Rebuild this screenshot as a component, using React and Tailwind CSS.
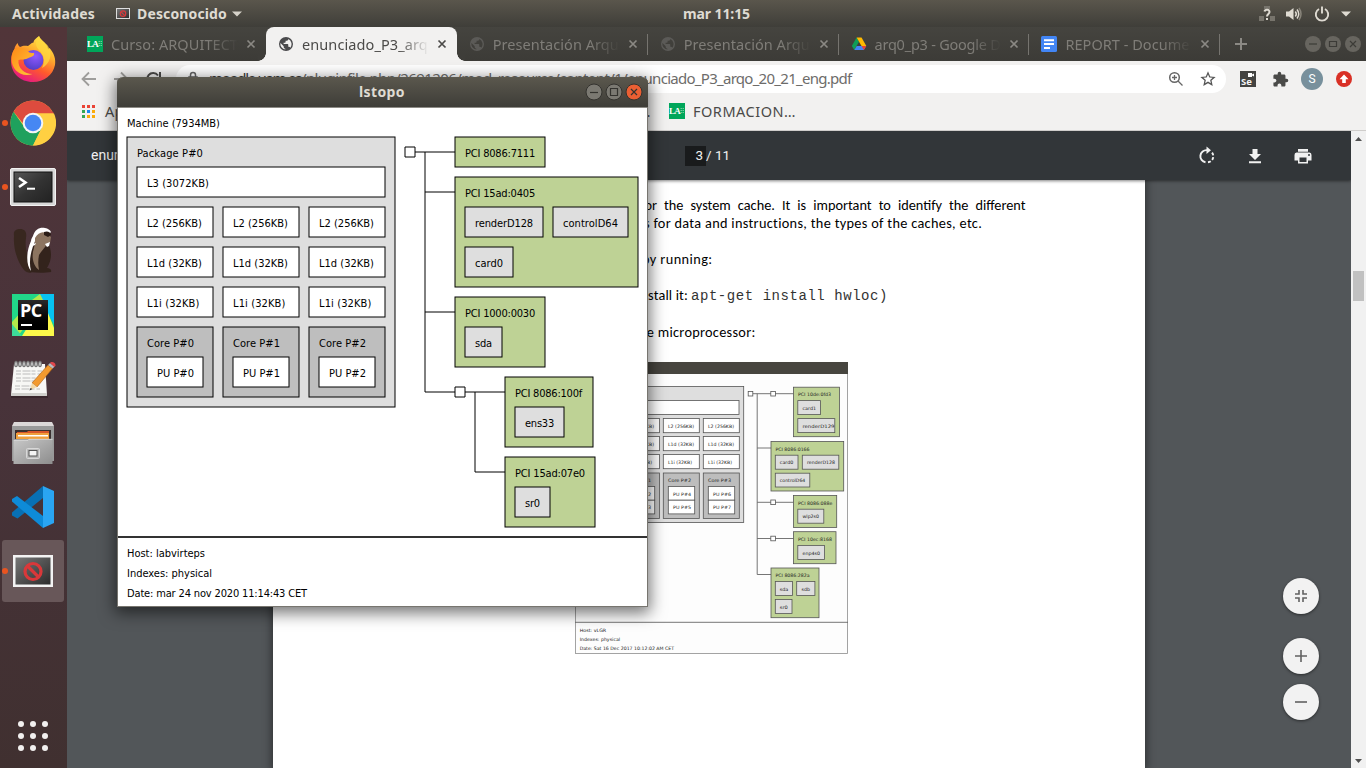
import { useLayoutEffect, useRef, useState } from "react";

/* Text tracked so that it fills a known advance width. */
function Fit({ w, by = "letter", className = "", children }) {
  const ref = useRef(null);
  const [gap, setGap] = useState(0);
  useLayoutEffect(() => {
    const el = ref.current;
    const prev = el.style.cssText;
    el.style.letterSpacing = "0px";
    el.style.wordSpacing = "0px";
    const nat = el.getBoundingClientRect().width;
    el.style.cssText = prev;
    const n = by === "word" ? children.split(" ").length - 1 : children.length;
    setGap((w - nat) / n);
  }, [w, by, children]);
  const style = by === "word" ? { wordSpacing: gap + "px" } : { letterSpacing: gap + "px" };
  return (
    <span ref={ref} style={style} className={"inline-block self-start whitespace-pre " + className}>
      {children}
    </span>
  );
}

/* ---------- icons ---------- */

function Globe({ color }) {
  return (
    <svg width="16" height="16" viewBox="0 0 24 24" className="shrink-0">
      <path
        fill={color}
        d="M12 1.5A10.5 10.5 0 1 0 12 22.5 10.5 10.5 0 1 0 12 1.5zm-1 18.900a8.500 8.500 0 0 1-7.300-9.900L8.500 15.500v1c0 1.100.9 2.500 2.500 2.500zm7.500-2.900c-.3-.9-1.100-1.500-2.100-1.500h-1v-3c0-.6-.5-1-1-1h-6v-2h2c.6 0 1-.5 1-1v-2h2c1.100 0 2-.9 2-2v-.4a8.500 8.500 0 0 1 3.100 12.900z"
      />
    </svg>
  );
}

function UamIcon() {
  return (
    <span className="flex h-4 w-4 shrink-0 items-center overflow-hidden bg-[#00a65a] font-['Liberation_Serif',serif] text-[9px] leading-none font-bold text-white">
      <span className="tracking-[-0.8px]">LA</span>
      <svg width="5" height="6" className="shrink-0">
        <path d="M.5 .5h4M.5 2.500h4M.5 4.500h4" stroke="#6fcb9a" strokeDasharray="1.500 .5" />
      </svg>
    </span>
  );
}

function DriveIcon() {
  return (
    <svg width="16" height="16" viewBox="0 0 16 16" className="shrink-0">
      <path fill="#0f9d58" d="M5.600 1.500L8 5.700 3.300 14 .8 9.900z" />
      <path fill="#ffba00" d="M5.600 1.500h4.900L15.300 10h-4.800z" />
      <path fill="#4285f4" d="M5.700 10h9.500L12.800 14H3.300z" />
      <path fill="#ea4335" d="M10.500 10h4.800L12.900 14z" />
    </svg>
  );
}

function DocsIcon() {
  return (
    <svg width="16" height="16" viewBox="0 0 16 16" className="shrink-0">
      <rect width="16" height="16" rx="1.500" fill="#4285f4" />
      <path stroke="#fff" strokeWidth="2" d="M3 4.200h10M3 8h10M3 12h6" />
    </svg>
  );
}

function Close({ color }) {
  return (
    <svg width="16" height="16" viewBox="0 0 16 16" className="shrink-0">
      <path d="M4.500 4.500l7 7M11.500 4.500l-7 7" stroke={color} strokeWidth="1.700" />
    </svg>
  );
}

function Firefox() {
  return (
    <svg width="46" height="48" viewBox="0 0 46 48">
      <defs>
        <linearGradient id="ff1" x1=".8" y1="0" x2=".3" y2="1">
          <stop offset="0" stopColor="#fff44f" />
          <stop offset=".35" stopColor="#ffb02e" />
          <stop offset=".65" stopColor="#ff5a2c" />
          <stop offset="1" stopColor="#e31587" />
        </linearGradient>
        <radialGradient id="ff2" cx=".6" cy=".3" r=".8">
          <stop offset="0" stopColor="#9059ff" />
          <stop offset="1" stopColor="#4a3bc0" />
        </radialGradient>
        <linearGradient id="ff3" x1="0" y1="0" x2="1" y2="1">
          <stop offset="0" stopColor="#ff8a16" />
          <stop offset="1" stopColor="#ffc83a" />
        </linearGradient>
      </defs>
      <path
        fill="url(#ff1)"
        d="M29 1c1 3 5 5.500 7 8.500 1.500 1.500 2 4 2 5l1.500-1.500C44 18 46 24 45 30c-2 10-11 17-22 17C10 47 1 38 1 26c0-5 1-8 3.500-12 0-2 1.500-4 3-6 .5 2 1.500 3 2.500 4 3-1.500 5-1.500 8-1 2-1.500 3-3 5.500-3.500C24 4 27 3 29 1z"
      />
      <circle cx="23.500" cy="25" r="10" fill="url(#ff2)" />
      <path
        fill="url(#ff3)"
        d="M4.500 14C8 12 13 12 16 15c2 2.500 5 3 8 3 1 3-3 4-5.500 5-3 2-7 1-10 2-1 8 6 14 14 14-11 4-21-4-21-15 0-4 1-7 3-10z"
      />
      <path fill="#ffda3f" opacity=".75" d="M29 1c-4 5-4 10 0 14 4 4 7 10 3 18 8-4 11-14 6-22-2-3-8-6-9-10z" />
    </svg>
  );
}

function Chrome() {
  return (
    <svg width="46" height="46" viewBox="-23 -23 46 46">
      <circle r="22.500" fill="#fdd142" />
      <path d="M-19.500-11.200A22.500 22.500 0 0 1 19.500-11.200Q21 -10 21.200-9.500H0L-8 3z" fill="#dd4b3e" />
      <path d="M-19.500-11.200A22.500 22.500 0 0 0 0 22.500L9 5-8 5z" fill="#1fa15d" />
      <path d="M9 4L0 22.500A22.500 22.500 0 0 0 21-9.500H0z" fill="#ffd042" />
      <circle r="10.300" fill="#f5f5f5" />
      <circle r="8.300" fill="#4687f3" />
    </svg>
  );
}

function Terminal() {
  return (
    <svg width="46" height="38" viewBox="0 0 46 38">
      <defs>
        <linearGradient id="tm" x1="0" y1="0" x2="1" y2="1">
          <stop offset="0" stopColor="#555" />
          <stop offset=".5" stopColor="#333" />
          <stop offset="1" stopColor="#222" />
        </linearGradient>
      </defs>
      <rect x=".5" y=".5" width="45" height="37" rx="1.500" fill="#d8d8d8" stroke="#f2f2f2" />
      <rect x="3.500" y="3.500" width="39" height="31" fill="#111" />
      <rect x="4.500" y="4.500" width="37" height="29" fill="url(#tm)" />
      <path d="M9 10l6.500 4.500L9 19" fill="none" stroke="#fff" strokeWidth="2.600" />
      <path d="M17 20.700h8" stroke="#fff" strokeWidth="2" />
    </svg>
  );
}

function Beaver() {
  return (
    <svg width="40" height="48" viewBox="0 0 40 48">
      <path fill="#38271f" d="M1 9C0 3 4 2 7 2c5 0 7 3 6 9-1 7 0 14 3 20 2 5 4 8 4 13-2 3-6 2-9-1C5 36 0 22 1 9z" />
      <path fill="#33231c" d="M19 20c-4 8-5 19-2 25 7 1 15 1 21 0 1-2-1-4-4-4 4-6 5-14 3-20l-3-8z" />
      <path fill="#fff" d="M20 9c2-7 7-9 12-8 3 .5 5 2 6 4l-3 3-12 4c-4 9-8 20-5 32-5-6-5-19 0-30 0-2 1-3 2-5z" />
      <path fill="#8c7460" d="M22 11c3-5 7-7 11-5l5 4-1 6-3 1c-2 4-6 7-8 11-1 5-1 10 0 15-6-4-8-14-5-22 1-4 1-7 1-10z" />
      <path fill="#2b1c16" d="M31 5c3-1.500 7 0 7 3l-3 2-4-2z" />
      <path fill="#fff" d="M32 17l5-2-1 4-2 1zM20 17l3-1-1 2-3 1z" />
    </svg>
  );
}

function PyCharm() {
  return (
    <div className="relative flex h-[42px] w-[42px] items-center justify-center">
      <svg width="42" height="42" viewBox="0 0 42 42" className="absolute inset-0">
        <rect width="42" height="42" fill="#21d789" />
        <path fill="#07c3f2" d="M27 0h15v30L30 12z" />
        <path fill="#b4e84b" d="M20 6L28 0l4 8L6 42H0V28z" />
        <path fill="#fcf84a" d="M34 14l8 20v8H10l5-8z" />
        <path fill="#3ddc9a" d="M0 30l10 12H0z" />
      </svg>
      <div className="relative flex h-[30px] w-[30px] flex-col justify-between bg-gradient-to-b from-[#2a2a2a] to-black px-[2px] pb-1">
        <span className="font-['Open_Sans',sans-serif] text-[18px] leading-[21px] font-bold tracking-[-0.5px] text-white">PC</span>
        <span className="ml-px h-[2px] w-[11px] bg-white" />
      </div>
    </div>
  );
}

function Gedit() {
  return (
    <svg width="46" height="38" viewBox="0 0 46 38">
      <path fill="#2a1c20" opacity=".5" d="M1 36h37v2H1z" />
      <path fill="#f7f7f5" d="M4 4h31l2 31H1z" />
      <path fill="#d0d0cc" d="M1.200 33h35.700l.1 3H1z" />
      <path stroke="#bbb" strokeDasharray="5 1.500 8 1 4 2" d="M6 11h26M6 14h24M6 18h26M6 21h20M5 26h16M5 29h25" />
      <g fill="none" stroke="#777" strokeWidth="1.300">
        {[6, 10, 14, 18, 22, 26, 30].map((x) => (
          <ellipse key={x} cx={x} cy="4" rx="1.300" ry="2.600" fill="#e8e8e8" />
        ))}
      </g>
      <path fill="#f39a2f" stroke="#a85d13" strokeWidth=".6" d="M22 23L38 5l4.500 3.500L27 27z" />
      <path fill="#f3d9a8" d="M22 23l5 4-7 3z" />
      <path fill="#333" d="M20.500 28l2 1-3 1.500z" />
      <path fill="#b9bcc0" d="M38 5l2-2 4.500 3.800-2 1.800z" />
      <path fill="#e2474c" d="M40 3c1-2 6-1 5.500 2.500l-1 1.500z" />
    </svg>
  );
}

function Files() {
  return (
    <svg width="42" height="44" viewBox="0 0 42 44">
      <defs>
        <linearGradient id="fl" x1="0" y1="0" x2="1" y2="1">
          <stop offset="0" stopColor="#c8c8c8" />
          <stop offset="1" stopColor="#8d8d8d" />
        </linearGradient>
      </defs>
      <path fill="#999" d="M0 5h42v35H0z" />
      <path fill="#dcd8d8" d="M2 1h38l2 4H0z" />
      <path fill="#3a3030" d="M3 9h36v9H3z" />
      <path fill="#d8572a" d="M5 11h10l1-1h21v8H5z" />
      <path fill="#f0a03c" d="M4 12h33v6H4z" />
      <path fill="#fff" d="M6 14h30v1.500H6z" />
      <path fill="url(#fl)" d="M1.500 19h14l1-1h24v25h-39z" />
      <path fill="none" stroke="#ddd" strokeWidth=".8" d="M2 19.300h14l1-1h23.500" />
      <rect x="14.500" y="27.500" width="13" height="10" rx="1" fill="#bbb" stroke="#d8d8d8" />
      <rect x="17" y="29.500" width="8" height="5.500" fill="#f4f4f4" stroke="#555" />
    </svg>
  );
}

function VsCode() {
  return (
    <svg width="42" height="42" viewBox="0 0 42 42">
      <path fill="#0870b4" d="M31 0v12L5.500 32.500 0 29.500v-3z" />
      <path fill="#0e8bd8" d="M0 13l5-3L31 30v12L0 15.500z" />
      <path fill="#2aa5f2" d="M31 0l11 5v32l-11 5z" />
    </svg>
  );
}

function NoEntry({ big }) {
  return (
    <svg width={big ? 40 : 14} height={big ? 32 : 11} viewBox="0 0 40 32">
      <defs>
        <linearGradient id="ne" x1="0" y1="0" x2="1" y2="1">
          <stop offset="0" stopColor="#777" />
          <stop offset="1" stopColor="#2c2c2c" />
        </linearGradient>
      </defs>
      <rect width="40" height="32" fill="#f3f3f3" />
      <rect x="2.500" y="2.500" width="35" height="27" fill="url(#ne)" />
      <circle cx="20" cy="16.500" r="8" fill="none" stroke="#d9383a" strokeWidth="3.200" />
      <path d="M14.500 11l11 11" stroke="#d9383a" strokeWidth="3.200" />
    </svg>
  );
}

/* ---------- desktop shell ---------- */

function TopBar() {
  return (
    <header className="flex h-[27px] w-full shrink-0 items-center bg-gradient-to-b from-[#5a564c] to-[#3f3e39] text-[14px] leading-[21px] font-bold text-[#dfdbd2]">
      <div className="flex w-[683px] shrink-0 items-center pl-3">
        <Fit w={83}>Actividades</Fit>
        <span className="mr-[7px] ml-[21px]">
          <NoEntry />
        </span>
        <Fit w={90}>Desconocido</Fit>
        <svg width="10" height="6" className="ml-[5px]">
          <path d="M0 .5h10L5 5.500z" fill="#d6d2c9" />
        </svg>
      </div>
      <div className="flex">
        <Fit w={67}>mar 11:15</Fit>
      </div>
      <div className="flex flex-1 items-center justify-end gap-[11px] pr-[15px]">
        <svg width="16" height="17" viewBox="0 0 16 17">
          <path fill="#77746c" d="M5 1h6v3H5zM0 11h5v5H0zM11 11h5v5h-5z" />
          <path d="M5.500 6.500C6 4 10.500 4 10.500 7c0 2-2.500 2-2.500 4.500M8 13v2" fill="none" stroke="#dfdbd2" strokeWidth="2" />
        </svg>
        <svg width="17" height="14" viewBox="0 0 17 14">
          <path fill="#dfdbd2" d="M0 4.500h3L7.500 1v12L3 9.500H0z" />
          <path fill="none" stroke="#dfdbd2" strokeWidth="1.500" d="M9.300 4.500q2 2.500 0 5M11 2.500q3.500 4.500 0 9" />
          <path fill="none" stroke="#88847a" strokeWidth="1.500" d="M13 1q4 6 0 12" />
        </svg>
        <svg width="16" height="16" viewBox="0 0 16 16">
          <path fill="none" stroke="#dfdbd2" strokeWidth="1.900" d="M5 3a6.200 6.200 0 1 0 6 0M8 .5v7" />
        </svg>
        <svg width="10" height="6">
          <path d="M0 .5h10L5 5.500z" fill="#dfdbd2" />
        </svg>
      </div>
    </header>
  );
}

const dockItems = [
  { icon: <Firefox /> },
  { icon: <Chrome />, on: true },
  { icon: <Terminal />, on: true },
  { icon: <Beaver /> },
  { icon: <PyCharm /> },
  { icon: <Gedit /> },
  { icon: <Files /> },
  { icon: <VsCode /> },
  { icon: <NoEntry big />, on: true, active: true },
];

function Dock() {
  return (
    <nav className="flex w-[67px] shrink-0 flex-col bg-gradient-to-b from-[#513539] via-[#48333a] to-[#403030]">
      {dockItems.map((d, i) => (
        <div key={i} className="flex h-16 items-center">
          <div
            className={
              d.active
                ? "relative ml-[2px] flex h-[62px] w-[62px] items-center justify-center rounded-[3px] bg-[#685759]"
                : "relative ml-[2px] flex h-[62px] w-[62px] items-center justify-center"
            }
          >
            {d.on && <span className="absolute top-[28px] left-0 h-[6px] w-[6px] rounded-full bg-[#e95420]" />}
            {d.icon}
          </div>
        </div>
      ))}
      <div className="mt-auto mb-[17px] ml-[18px] grid w-[30px] grid-cols-3 gap-[6px]">
        {Array.from({ length: 9 }, (_, i) => (
          <span key={i} className="h-[6px] w-[6px] rounded-full bg-[#f2f0ef]" />
        ))}
      </div>
    </nav>
  );
}

/* ---------- browser ---------- */

const tabs = [
  { title: "Curso: ARQUITECT", w: 127, icon: <UamIcon /> },
  { title: "enunciado_P3_arq", w: 126, icon: <Globe color="#4a4a4c" />, active: true },
  { title: "Presentación Arqu", w: 126, icon: <Globe color="#5b5a57" />, line: true },
  { title: "Presentación Arqu", w: 126, icon: <Globe color="#5b5a57" />, line: true },
  { title: "arq0_p3 - Google D", w: 126, icon: <DriveIcon />, line: true },
  { title: "REPORT - Docume", w: 124, icon: <DocsIcon />, line: true },
];

function Tab({ t }) {
  return (
    <div
      className={
        t.active
          ? "relative flex h-[34px] w-[190.9px] items-center rounded-t-lg bg-[#f2f1f0] pl-3 text-[#4b4a48]"
          : "relative flex h-[34px] w-[190.9px] items-center pl-3 text-[#7f7d78]"
      }
    >
      {t.icon}
      <div className="ml-2 flex w-[127px] [mask-image:linear-gradient(to_right,black_76%,transparent_100%)]">
        <Fit w={t.w} className="text-[14.500px] leading-5">
          {t.title}
        </Fit>
      </div>
      <span className="ml-[5px]">
        <Close color={t.active ? "#4b4a48" : "#8b8984"} />
      </span>
      {t.line && <span className="ml-[6px] h-[21px] w-px bg-[#76746f]" />}
      {t.active && (
        <>
          <span className="absolute bottom-0 -left-2 h-2 w-2 bg-[radial-gradient(circle_at_0_0,#3e3d39_7.500px,#f2f1f0_8px)]" />
          <span className="absolute -right-2 bottom-0 h-2 w-2 bg-[radial-gradient(circle_at_100%_0,#3e3d39_7.500px,#f2f1f0_8px)]" />
        </>
      )}
    </div>
  );
}

function TabStrip() {
  return (
    <div className="flex h-[34px] items-center bg-gradient-to-b from-[#45443f] to-[#3c3b37] pl-2">
      {tabs.map((t, i) => (
        <Tab key={i} t={t} />
      ))}
      <svg width="14" height="14" className="ml-[14px]">
        <path d="M7 1v12M1 7h12" stroke="#8b8984" strokeWidth="2" />
      </svg>
      <div className="ml-auto flex gap-1 pr-[5px]">
        {["M4 8h8", "M4.500 5.500h7v5h-7z", "M5 5l6 6M11 5l-6 6"].map((d) => (
          <svg key={d} width="16" height="16">
            <circle cx="8" cy="8" r="8" fill="#67655f" />
            <path d={d} fill="none" stroke="#3c3b37" strokeWidth="1.200" />
          </svg>
        ))}
      </div>
    </div>
  );
}

function Toolbar() {
  return (
    <div className="flex h-9 items-center bg-[#f2f1f0]">
      <div className="flex w-[109px] items-center gap-4 pl-[14px]">
        <svg width="16" height="16" className="shrink-0">
          <path d="M15 8H2M8 1.500L1.500 8 8 14.500" fill="none" stroke="#9e9d9b" strokeWidth="1.800" />
        </svg>
        <svg width="16" height="16" className="shrink-0">
          <path d="M1 8h13M8 1.500L14.500 8 8 14.500" fill="none" stroke="#9e9d9b" strokeWidth="1.800" />
        </svg>
        <svg width="16" height="16" className="shrink-0">
          <path d="M13 4.500A6 6 0 1 0 14 9.500M15 1v6H9" fill="none" stroke="#4b4a48" strokeWidth="2" />
        </svg>
      </div>
      <div className="flex h-7 w-[1050px] items-center rounded-full bg-white pl-[11px]">
        <svg width="12" height="14" className="mb-[2px] shrink-0">
          <path d="M3.500 6V4a2.500 2.500 0 0 1 5 0v2M2 6h8v7H2z" fill="none" stroke="#666" strokeWidth="1.500" />
        </svg>
        <span className="mb-[3px] ml-[10px] flex text-[15px] leading-5 text-[#6d6c6a]">
          <Fit w={92} className="text-[#3c3b39]">
            moodle.uam.es
          </Fit>
          <Fit w={334}>/pluginfile.php/2691206/mod_resource/content/1/e</Fit>
          <Fit w={216.5}>nunciado_P3_arqo_20_21_eng.pdf</Fit>
        </span>
        <svg width="16" height="16" className="ml-auto">
          <g fill="none" stroke="#666" strokeWidth="1.500">
            <circle cx="6.500" cy="6.500" r="4.800" />
            <path d="M10 10l4.500 4.500M4 6.500h5M6.500 4v5" strokeWidth="1.300" />
          </g>
        </svg>
        <svg width="16" height="16" viewBox="0 0 24 24" className="mr-[10px] ml-4">
          <path
            fill="#555"
            d="M23.500 8.900l-8.200-.7L12 .5 8.700 8.200.5 8.900l6.200 5.400L4.900 22.500 12 18.200l7.100 4.300-1.800-8.200zM12 15.900l-4.300 2.600 1.100-4.900-3.800-3.300 5-.4 2-4.600 2 4.600 5 .4-3.800 3.300 1.100 4.900z"
          />
        </svg>
      </div>
      <div className="ml-[14px] flex items-center">
        <span className="relative flex h-4 w-4 items-end bg-[#434341] pb-px pl-px">
          <span className="text-[9.500px] leading-[9px] font-bold text-[#f4f4f4]">Se</span>
          <svg width="6" height="4" className="absolute top-[2px] right-[2px]">
            <path d="M0 0h4v1.500L6 .5v3L4 2.500V4H0z" fill="#fff" />
          </svg>
        </span>
        <svg width="17" height="17" viewBox="0 0 24 24" className="ml-4">
          <path
            fill="#4a4a48"
            d="M20.500 11H19V7c0-1.100-.9-2-2-2h-4V3.500a2.500 2.500 0 0 0-5 0V5H4c-1.100 0-2 .9-2 2v3.800h1.500c1.500 0 2.700 1.200 2.700 2.700S5 16.200 3.500 16.200H2V20c0 1.100.9 2 2 2h3.800v-1.500c0-1.500 1.200-2.700 2.700-2.700s2.700 1.200 2.700 2.700V22H17c1.100 0 2-.9 2-2v-4h1.500a2.500 2.500 0 0 0 0-5z"
          />
        </svg>
        <span className="ml-3 flex h-[22px] w-[22px] items-center justify-center rounded-full bg-[#78909c] font-[Roboto,sans-serif] text-[12px] text-white">
          S
        </span>
        <svg width="16" height="16" className="ml-[13px]">
          <circle cx="8" cy="8" r="8" fill="#d93025" />
          <path d="M8 3.500L3.500 8.200h2.700V12h3.600V8.200h2.700z" fill="#fff" />
        </svg>
      </div>
    </div>
  );
}

const appDots = ["#ea4335", "#ea4335", "#ea4335", "#34a853", "#1a88f0", "#fbab08", "#34a853", "#fbab08", "#fbab08"];

function Bookmarks() {
  return (
    <div className="flex h-[34px] items-center border-b border-[#cfcdcb] bg-[#f2f1f0] pb-[5px] pl-[15px] text-[14.500px] leading-5 text-[#4b4a48]">
      <span className="grid grid-cols-3 gap-[2px]">
        {appDots.map((c, i) => (
          <span key={i} className="h-[3px] w-[3px]" style={{ background: c }} />
        ))}
      </span>
      <span className="ml-[10px] flex">
        <Fit w={86}>Aplicaciones</Fit>
      </span>
      <span className="ml-[448px] w-[30px] pr-[19px] text-right">…</span>
      <UamIcon />
      <span className="ml-2 flex">
        <Fit w={103}>FORMACION…</Fit>
      </span>
    </div>
  );
}

/* The document's embedded figure, in screen coordinates. */
const green = "#bed295";
const capRects = [
  [575, 386.5, 168.7, 136, "#dedede"],
  [600, 400.5, 139, 14, "#fff"],
  [623, 418.5, 36.5, 14.2, "#fff"],
  [663.3, 418.5, 36, 14.2, "#fff"],
  [703.3, 418.5, 36, 14.2, "#fff"],
  [623, 436.5, 36.5, 14.2, "#fff"],
  [663.3, 436.5, 36, 14.2, "#fff"],
  [703.3, 436.5, 36, 14.2, "#fff"],
  [623, 454.5, 36.5, 14.2, "#fff"],
  [663.3, 454.5, 36, 14.2, "#fff"],
  [703.3, 454.5, 36, 14.2, "#fff"],
  [623, 473, 36.5, 45.5, "#bdbdbd"],
  [663.3, 473, 36, 45.5, "#bdbdbd"],
  [703.3, 473, 36, 45.5, "#bdbdbd"],
  [628, 486.5, 26.7, 13.7, "#fff"],
  [628, 500.2, 26.7, 13.7, "#fff"],
  [668.3, 486.5, 26.4, 13.7, "#fff"],
  [668.3, 500.2, 26.4, 13.7, "#fff"],
  [708.3, 486.5, 26.4, 13.7, "#fff"],
  [708.3, 500.2, 26.4, 13.7, "#fff"],
  [793.5, 387.2, 46, 49.5, green],
  [797.8, 400.6, 22.6, 14, "#dedede"],
  [797.8, 418.6, 37, 14, "#dedede"],
  [771, 441.5, 72.7, 49.5, green],
  [775.3, 455.2, 22.7, 14, "#dedede"],
  [802.3, 455.2, 36.5, 14, "#dedede"],
  [775.3, 473.2, 34.5, 13.8, "#dedede"],
  [793.5, 495.5, 43.2, 32, green],
  [797.8, 509.2, 26, 14, "#dedede"],
  [793.5, 531.7, 42.5, 32, green],
  [797.8, 545.4, 26.8, 14, "#dedede"],
  [771, 568, 48, 49.7, green],
  [775.3, 581.5, 17.2, 14, "#dedede"],
  [796.7, 581.5, 18.2, 14, "#dedede"],
  [775.3, 599.6, 16.7, 14, "#dedede"],
];
const capTexts = [
  ["L2 (256KB)", 668, 427.5, 26], ["L2 (256KB)", 708, 427.5, 26],
  ["L1d (32KB)", 668, 445.8, 26], ["L1d (32KB)", 708, 445.8, 26],
  ["L1i (32KB)", 668, 463.8, 24], ["L1i (32KB)", 708, 463.8, 24],
  ["L2 (256KB)", 628, 427.5, 26], ["L1d (32KB)", 628, 445.8, 26], ["L1i (32KB)", 628, 463.8, 24],
  ["Core P#1", 628, 482, 23], ["Core P#2", 668, 482, 23], ["Core P#3", 708, 482, 23],
  ["PU P#2", 633, 495.6, 18], ["PU P#3", 633, 509.2, 18],
  ["PU P#4", 673, 495.6, 18], ["PU P#5", 673, 509.2, 18],
  ["PU P#6", 713, 495.6, 18], ["PU P#7", 713, 509.2, 18],
  ["PCI 10de:0fd3", 798, 396.2, 33], ["card1", 802.5, 409.7, 13.5], ["renderD129", 802.5, 428, 32],
  ["PCI 8086:0166", 775.5, 450.5, 34], ["card0", 779.8, 464, 13.5], ["renderD128", 807, 464, 28], ["controlD64", 779.8, 482.2, 25.5],
  ["PCI 8086:088e", 798, 504.7, 34.5], ["wlp2s0", 802.5, 518.3, 16.5],
  ["PCI 10ec:8168", 798, 540.8, 34], ["enp4s0", 802.5, 554.5, 17.5],
  ["PCI 8086:282a", 775.5, 577, 34], ["sda", 779.8, 590.6, 8.5], ["sdb", 801.5, 590.6, 8.5], ["sr0", 779.8, 608.8, 8],
  ["Host: vLGR", 579.7, 631.5, 26.5], ["Indexes: physical", 579.7, 640.6, 40.5], ["Date: Sat 16 Dec 2017 10:12:02 AM CET", 579.7, 649.7, 94.3],
];

function Capture() {
  return (
    <svg width="275" height="293" viewBox="574 362 275 293" className="block font-['DejaVu_Sans',sans-serif]">
      <rect x="575.5" y="362.5" width="272" height="291" fill="#fdfdfd" stroke="#8d8d8d" strokeWidth=".8" />
      <rect x="575" y="362" width="273" height="12" fill="#47453f" />
      <path
        fill="none"
        stroke="#666"
        strokeWidth=".9"
        d="M752.5 393.7H793.5M757.2 393.7V574.5H771M757.2 448H771M757.2 502.3H793.5M757.2 538.5H793.5M575 622.3H848"
      />
      {capRects.map(([x, y, w, h, f], i) => (
        <rect key={i} x={x} y={y} width={w} height={h} fill={f} stroke="#555" strokeWidth=".8" />
      ))}
      {[[748.2, 391.4], [770.8, 391.4], [770.8, 500], [770.8, 536.2]].map(([x, y], i) => (
        <rect key={i} x={x} y={y} width="4.6" height="4.6" fill="#fff" stroke="#555" strokeWidth=".8" />
      ))}
      {capTexts.map(([s, x, y, w], i) => (
        <text key={i} x={x} y={y} textLength={w} lengthAdjust="spacingAndGlyphs" fontSize="4.6" fill="#222">
          {s}
        </text>
      ))}
    </svg>
  );
}

function PdfPage() {
  return (
    <article className="ml-[206px] w-[872px] shrink-0 bg-white pt-4 font-[Carlito,Lato,sans-serif] text-[14.300px] leading-[18px] text-black shadow-[0_0_8px_2px_rgba(0,0,0,0.4)]">
      <p className="flex pl-[371.500px]">
        <Fit w={381} by="word">or the system cache. It is important to identify the different</Fit>
      </p>
      <p className="flex pl-[371px]">
        <Fit w={338}>s for data and instructions, the types of the caches, etc.</Fit>
      </p>
      <p className="mt-[18px] flex pl-[369px]">
        <Fit w={70.5}>by running:</Fit>
      </p>
      <p className="mt-[18px] flex pl-[364px]">
        <Fit w={51}>install it:</Fit>
        <Fit w={197} className="ml-[3px] pt-px font-['Liberation_Mono',monospace] text-[14px] text-[#333]">
          apt-get install hwloc)
        </Fit>
      </p>
      <p className="mt-[18px] flex pl-[361px]">
        <Fit w={121.5}>the microprocessor:</Fit>
      </p>
      <div className="mt-[21px] ml-[301px]">
        <Capture />
      </div>
    </article>
  );
}

function RoundButton({ d, className }) {
  return (
    <button
      className={
        "flex h-9 w-9 items-center justify-center rounded-full bg-[#f2f2f2] shadow-[0_1px_3px_rgba(0,0,0,0.5)] " + className
      }
    >
      <svg width="14" height="14">
        <path d={d} fill="none" stroke="#616161" strokeWidth="1.600" />
      </svg>
    </button>
  );
}

function Pdf() {
  return (
    <div className="relative flex h-[637px]">
      <div className="flex w-[1284px] flex-col overflow-hidden bg-[#525659]">
        <div className="relative z-10 flex h-[49px] shrink-0 items-center bg-[#323639] pl-6 font-[Roboto,sans-serif] text-[14px] text-[#f1f1f1] shadow-[0_1px_3px_rgba(0,0,0,0.5)]">
          <span className="w-[594px]">enunciado_P3_arqo_20_21_eng.pdf</span>
          <span className="flex h-5 w-[21px] items-center justify-end bg-[#191b1c] pr-[3px] text-[13.500px]">3</span>
          <span className="text-[13.500px]">/ 11</span>
          <div className="ml-auto flex items-center gap-6 pr-9">
            <svg width="24" height="24" viewBox="0 0 24 24">
              <g fill="none" stroke="#f1f1f1" strokeWidth="1.900">
                <path d="M10.500 18.300A6.100 6.100 0 0 1 12 6.200h1.500" />
                <path d="M13 18.300A6.100 6.100 0 0 0 17 8.500" strokeDasharray="3 1.800" />
              </g>
              <path d="M11.500 2.500L16 6.300 11.500 10z" fill="#f1f1f1" />
            </svg>
            <svg width="24" height="24" viewBox="0 0 24 24">
              <path fill="#f1f1f1" d="M18 10h-3.500V5h-5v5H6l6 6zM6 17.300v1.900h12v-1.900z" />
            </svg>
            <svg width="24" height="24" viewBox="0 0 24 24">
              <path
                fill="#f1f1f1"
                d="M18.500 8.500h-13A2.500 2.500 0 0 0 3.500 11v5.500H7V19.500h10v-3h3.500V11a2.500 2.500 0 0 0-2-2.500zM15.500 18h-7v-4.500h7zM18 12a1 1 0 1 1 0-2 1 1 0 0 1 0 2zM17 5H7v2.700h10z"
              />
            </svg>
          </div>
        </div>
        <div className="flex flex-1">
          <PdfPage />
        </div>
      </div>
      <div className="absolute top-[447px] left-[1216px] flex flex-col">
        <RoundButton className="" d="M1 5h4V1M9 1v4h4M1 9h4v4M9 13V9h4" />
        <RoundButton className="mt-6" d="M7 1v12M1 7h12" />
        <RoundButton className="mt-[10px]" d="M1 7h12" />
      </div>
      <div className="flex w-[15px] flex-col items-center bg-[#f1f1f1] pt-[6px] pb-[5px]">
        <svg width="7" height="4">
          <path d="M0 4h7L3.500 0z" fill="#505050" />
        </svg>
        <span className="mt-[130px] h-[30px] w-[11px] bg-[#c1c1c1]" />
        <svg width="7" height="4" className="mt-auto">
          <path d="M0 0h7L3.500 4z" fill="#505050" />
        </svg>
      </div>
    </div>
  );
}

/* ---------- lstopo window ---------- */

/* Diagram node; its outline is a stroke centred on the node's edge. */
function Node({ className, children }) {
  return (
    <div className={"relative " + className}>
      <svg className="absolute inset-0 h-full w-full overflow-visible">
        <rect width="100%" height="100%" fill="none" stroke="#000" />
      </svg>
      {children}
    </div>
  );
}

function Leaf({ w, className, children }) {
  return (
    <Node className={"flex h-[30px] pt-[9px] pl-[10px] leading-4 " + className}>
      <Fit w={w}>{children}</Fit>
    </Node>
  );
}

function Heading({ w, children }) {
  return (
    <div className="flex h-[30px] pt-[9px] leading-4">
      <Fit w={w}>{children}</Fit>
    </div>
  );
}

function Pci({ name, w, className, children }) {
  return (
    <Node className={"bg-[#bed295] px-[10px] " + className}>
      <Heading w={w}>{name}</Heading>
      {children}
    </Node>
  );
}

const cores = [0, 1, 2];

function Package() {
  return (
    <Node className="h-[270px] w-[268px] bg-[#dedede] px-[10px]">
      <Heading w={66}>Package P#0</Heading>
      <Leaf w={62} className="bg-white">L3 (3072KB)</Leaf>
      <div className="mt-[10px] grid grid-cols-3 gap-[10px]">
        {cores.map((c) => (
          <Leaf key={c} w={55} className="bg-white">L2 (256KB)</Leaf>
        ))}
        {cores.map((c) => (
          <Leaf key={c} w={55} className="bg-white">L1d (32KB)</Leaf>
        ))}
        {cores.map((c) => (
          <Leaf key={c} w={52.5} className="bg-white">L1i (32KB)</Leaf>
        ))}
        {cores.map((c) => (
          <Node key={c} className="h-[70px] bg-[#bebebe] px-[10px]">
            <Heading w={47}>{"Core P#" + c}</Heading>
            <Leaf w={37} className="bg-white">{"PU P#" + c}</Leaf>
          </Node>
        ))}
      </div>
    </Node>
  );
}

function TitleButton({ d, close }) {
  return (
    <svg width="18" height="18">
      <circle cx="9" cy="9" r="8" fill={close ? "#ea5f33" : "#7b7972"} stroke="#34332f" />
      <path d={d} fill="none" stroke="#34332f" strokeWidth="1.200" />
    </svg>
  );
}

function Lstopo() {
  return (
    <section className="absolute top-[77px] left-[117px] z-20 flex h-[530px] w-[531px] flex-col rounded-t-md border-r border-b border-l border-[#77756f] bg-white shadow-[0_4px_16px_2px_rgba(0,0,0,0.55)]">
      <div className="-mx-px flex h-[30px] shrink-0 items-center rounded-t-md border-t border-[#5b594f] bg-gradient-to-b from-[#5a574d] to-[#3e3d38] pb-px text-[14px] leading-[21px] font-bold text-[#dfdbd2]">
        <span className="ml-[242px] flex pb-px">
          <Fit w={46}>lstopo</Fit>
        </span>
        <div className="mr-[5px] ml-auto flex gap-[2px]">
          <TitleButton d="M5 9.500h8" />
          <TitleButton d="M5.500 5.500h7v7h-7z" />
          <TitleButton close d="M6 6l6 6M12 6l-6 6" />
        </div>
      </div>
      <div className="relative flex-1 border-t border-[#8d8b86] font-['DejaVu_Sans_Condensed','DejaVu_Sans',sans-serif] text-[11px] text-black [font-stretch:condensed]">
        <svg width="529" height="429" viewBox="118 108 529 429" className="absolute top-0 left-0">
          <path
            fill="none"
            stroke="#000"
            d="M415 152H455M425 152V392H455M425 192H455M425 312H455M465 392H505M475 392V472H505"
          />
          <path fill="#fff" stroke="#000" d="M405 147h10v10h-10zM455 387h10v10h-10z" />
        </svg>
        <div className="flex h-[428px] flex-col">
          <div className="flex h-[29px] pt-2 pl-[9px] leading-4">
            <Fit w={93}>Machine (7934MB)</Fit>
          </div>
          <div className="flex pl-[9px]">
            <Package />
            <div className="relative ml-[60px] flex flex-col gap-[10px]">
              <Pci name="PCI 8086:7111" w={70} className="h-[30px] w-[90px]" />
              <Pci name="PCI 15ad:0405" w={70} className="h-[110px] w-[183px]">
                <div className="flex flex-wrap gap-[10px]">
                  <Leaf w={58} className="w-[78px] bg-[#dedede]">renderD128</Leaf>
                  <Leaf w={55} className="w-[75px] bg-[#dedede]">controlD64</Leaf>
                  <Leaf w={28} className="w-[48px] bg-[#dedede]">card0</Leaf>
                </div>
              </Pci>
              <Pci name="PCI 1000:0030" w={70} className="h-[70px] w-[90px]">
                <Leaf w={17} className="w-[37px] bg-[#dedede]">sda</Leaf>
              </Pci>
              <Pci name="PCI 8086:100f" w={67} className="ml-[50px] h-[70px] w-[88px]">
                <Leaf w={29} className="w-[49px] bg-[#dedede]">ens33</Leaf>
              </Pci>
              <Pci name="PCI 15ad:07e0" w={70} className="ml-[50px] h-[70px] w-[90px]">
                <Leaf w={15} className="w-[35px] bg-[#dedede]">sr0</Leaf>
              </Pci>
            </div>
          </div>
        </div>
        <div className="flex flex-col border-t-2 border-[#333] pt-[6px] pl-[9px] leading-5">
          <Fit w={78}>Host: labvirteps</Fit>
          <Fit w={85}>Indexes: physical</Fit>
          <Fit w={180}>Date: mar 24 nov 2020 11:14:43 CET</Fit>
        </div>
      </div>
    </section>
  );
}

export default function App() {
  return (
    <div className="relative flex h-[768px] w-[1366px] flex-col overflow-hidden font-['Noto_Sans','Open_Sans',sans-serif]">
      <TopBar />
      <div className="flex flex-1">
        <Dock />
        <main className="flex w-[1299px] flex-col">
          <TabStrip />
          <Toolbar />
          <Bookmarks />
          <Pdf />
        </main>
      </div>
      <Lstopo />
    </div>
  );
}
